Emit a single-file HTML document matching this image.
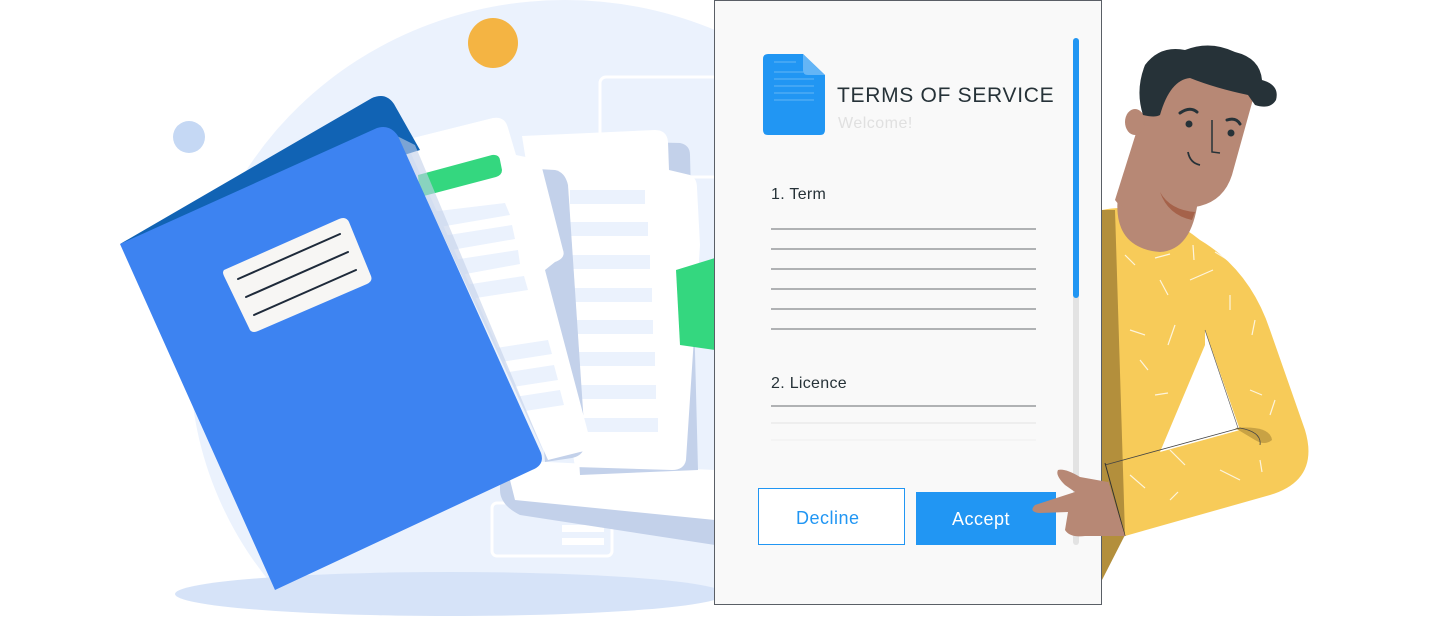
<!DOCTYPE html>
<html><head><meta charset="utf-8"><style>
html,body{margin:0;padding:0;background:#fff;width:1431px;height:617px;overflow:hidden;}
body{position:relative;font-family:"Liberation Sans",sans-serif;}
svg{position:absolute;left:0;top:0;display:block;}
.t{position:absolute;white-space:nowrap;color:#263238;line-height:1;}
</style></head><body>
<svg width="1431" height="617" viewBox="0 0 1431 617">
<defs><clipPath id="bc"><rect x="0" y="0" width="715" height="597"/></clipPath></defs>
<!-- background blob -->
<g clip-path="url(#bc)"><ellipse cx="565" cy="360" rx="375" ry="360" fill="#ebf2fd"/></g>
<ellipse cx="450" cy="594" rx="275" ry="22" fill="#d6e3f8"/>
<!-- faint outlines -->
<rect x="600" y="77" width="120" height="100" rx="6" fill="none" stroke="#fff" stroke-width="3"/>
<rect x="492" y="503" width="120" height="53" rx="5" fill="none" stroke="#fff" stroke-width="3"/>
<rect x="562" y="512" width="42" height="7" fill="#fff"/><rect x="562" y="525" width="42" height="7" fill="#fff"/><rect x="562" y="538" width="42" height="7" fill="#fff"/>
<!-- sun & dot -->
<circle cx="493" cy="43" r="25" fill="#f4b443"/>
<circle cx="189" cy="137" r="16" fill="#c5d8f4"/>
<!-- back sheets -->
<path d="M500 470 L715 485 L715 545 L520 515 Q500 505 500 490Z" fill="#c3d1ea"/>
<path d="M505 460 L715 470 L715 520 L515 500 Z" fill="#fff"/>
<path d="M560 140 L680 143 Q690 145 690 155 L698 470 L580 475 Z" fill="#c3d1ea"/>
<path d="M522 136 L655 130 Q667 130 668 142 L669 170 L690 175 Q697 178 697 188 L700 245 L686 460 Q684 470 672 470 L575 467 Z" fill="#fff"/>
<path d="M676 270 L715 258 L715 350 L680 345 Z" fill="#34d77f"/>
<g fill="#ebf2fd"><rect x="570" y="190" width="75" height="14"/><rect x="570" y="222" width="78" height="14"/><rect x="572" y="255" width="78" height="14"/><rect x="574" y="288" width="78" height="14"/><rect x="575" y="320" width="78" height="14"/><rect x="577" y="352" width="78" height="14"/><rect x="578" y="385" width="78" height="14"/><rect x="580" y="418" width="78" height="14"/></g>
<path d="M520 168 L555 170 Q565 172 568 185 L585 440 Q586 455 572 458 L545 462 Z" fill="#c3d1ea"/>
<path d="M405 140 L493 118 Q505 116 508 128 L516 155 L540 160 L563 250 Q566 258 555 262 L545 270 L590 440 Q592 450 580 452 L548 460 Z" fill="#fff"/>
<path d="M418 175 L492 155 Q499 154 500 160 L502 170 Q502 175 496 177 L420 197 Z" fill="#34d77f"/>
<g fill="#ebf2fd"><path d="M430 212 L505 203 L510 215 L434 228Z"/><path d="M436 237 L512 225 L515 239 L440 252Z"/><path d="M440 262 L518 250 L520 264 L444 278Z"/><path d="M445 288 L524 276 L528 290 L450 302Z"/><path d="M470 352 L548 340 L552 354 L475 366Z"/><path d="M476 377 L554 365 L558 380 L480 392Z"/><path d="M482 402 L560 390 L564 405 L486 417Z"/></g>
<!-- folder -->
<path d="M120 244 L372 98 Q386 92 394 104 L420 150 Z" fill="#1163b4"/>
<path d="M397 136 L415 145 L545 455 Z" fill="#c3d1ea" opacity="0.6"/>
<path d="M120 244 L377 128 Q390 124 398 136 L541 453 Q545 465 532 470 L275 590 Z" fill="#3d83f1"/>
<path d="M224 270 L339 219 Q346 216 349 222 L371 276 Q373 281 367 284 L258 331 Q251 334 249 328 L224 276 Q222 272 224 270Z" fill="#f7f6f4"/>
<g stroke="#1e2a3a" stroke-width="2" stroke-linecap="round"><line x1="238" y1="279" x2="340" y2="234"/><line x1="246" y1="297" x2="348" y2="252"/><line x1="254" y1="315" x2="356" y2="270"/></g>
<!-- man -->
<path d="M1102 210 Q1150 200 1200 240 Q1250 270 1270 330 L1305 430 Q1320 480 1270 495 L1125 536 L1102 540 Z" fill="#f7cb59"/>
<path d="M1205 330 L1240 430 L1160 452 L1205 345Z" fill="#fff"/>
<path d="M1102 210 L1115 210 L1125 535 L1102 580 Z" fill="#b38f3c"/>
<path d="M1235 428 Q1270 425 1272 440 Q1265 446 1255 440 Z" fill="#c8a244"/>
<path d="M1105 465 L1240 428 Q1262 432 1260 445" fill="none" stroke="#444" stroke-width="0.8"/>
<path d="M1105 463 L1125 536" stroke="#333" stroke-width="1"/>
<path d="M1205 330 L1238 428" stroke="#555" stroke-width="0.6"/>
<g stroke="#fff" stroke-width="1.2" opacity="0.8"><line x1="1125" y1="255" x2="1135" y2="265"/><line x1="1155" y1="258" x2="1170" y2="254"/><line x1="1193" y1="245" x2="1194" y2="260"/><line x1="1215" y1="252" x2="1228" y2="260"/><line x1="1160" y1="280" x2="1168" y2="295"/><line x1="1190" y1="280" x2="1213" y2="270"/><line x1="1230" y1="295" x2="1230" y2="310"/><line x1="1130" y1="330" x2="1145" y2="335"/><line x1="1175" y1="325" x2="1168" y2="345"/><line x1="1140" y1="360" x2="1148" y2="370"/><line x1="1155" y1="395" x2="1168" y2="393"/><line x1="1255" y1="320" x2="1252" y2="335"/><line x1="1250" y1="390" x2="1262" y2="395"/><line x1="1275" y1="400" x2="1270" y2="415"/><line x1="1215" y1="395" x2="1222" y2="410"/><line x1="1220" y1="470" x2="1240" y2="480"/><line x1="1170" y1="450" x2="1185" y2="465"/><line x1="1130" y1="475" x2="1145" y2="488"/><line x1="1170" y1="500" x2="1178" y2="492"/><line x1="1260" y1="460" x2="1262" y2="472"/></g>
<!-- neck & head -->
<path d="M1118 195 Q1112 248 1160 252 Q1192 250 1198 200 Z" fill="#b78875"/>
<path d="M1148 95 Q1155 75 1200 75 L1255 92 L1232 175 Q1224 200 1200 206 L1170 212 Q1125 215 1115 200 Z" fill="#b78875"/>
<path d="M1160 192 Q1170 210 1195 212 L1192 220 Q1168 215 1160 192Z" fill="#a5624a"/>
<ellipse cx="1135" cy="122" rx="10" ry="13" fill="#b78875"/>
<path d="M1143 115 Q1135 90 1145 65 Q1160 45 1185 50 Q1210 40 1235 52 Q1260 58 1262 80 Q1280 85 1276 100 Q1270 110 1255 105 L1248 95 Q1215 88 1190 78 Q1170 80 1160 115 Q1155 118 1143 115Z" fill="#263238"/>
<circle cx="1189" cy="124" r="3.5" fill="#263238"/><circle cx="1231" cy="133" r="3.5" fill="#263238"/>
<path d="M1180 113 Q1190 106 1197 112 M1227 120 Q1236 117 1240 124" stroke="#263238" stroke-width="3" fill="none" stroke-linecap="round"/>
<path d="M1212 120 L1212 152 L1220 153" stroke="#263238" stroke-width="1.5" fill="none"/>
<path d="M1188 152 Q1190 163 1200 165" stroke="#263238" stroke-width="1.8" fill="none"/>
<!-- card -->
<rect x="714.5" y="0.5" width="387" height="604" fill="#f9f9f9" stroke="#5a5f66" stroke-width="1"/>
<path d="M768 54 L803 54 L825 75 L825 130 Q825 135 820 135 L768 135 Q763 135 763 130 L763 59 Q763 54 768 54Z" fill="#2196f3"/>
<path d="M803 54 L825 75 L808 75 Q803 75 803 70Z" fill="#64b5f6"/>
<g stroke="#64b5f6" stroke-width="1"><line x1="774" y1="62" x2="796" y2="62"/><line x1="774" y1="72" x2="814" y2="72"/><line x1="774" y1="79" x2="814" y2="79"/><line x1="774" y1="86" x2="814" y2="86"/><line x1="774" y1="93" x2="814" y2="93"/><line x1="774" y1="100" x2="814" y2="100"/></g>
<g stroke="#666b70" stroke-width="1"><line x1="771" y1="229" x2="1036" y2="229"/><line x1="771" y1="249" x2="1036" y2="249"/><line x1="771" y1="269" x2="1036" y2="269"/><line x1="771" y1="289" x2="1036" y2="289"/><line x1="771" y1="309" x2="1036" y2="309"/><line x1="771" y1="329" x2="1036" y2="329"/><line x1="771" y1="406" x2="1036" y2="406"/></g>
<line x1="771" y1="423" x2="1036" y2="423" stroke="#e2e2e2"/><line x1="771" y1="440" x2="1036" y2="440" stroke="#efefef"/>
<rect x="1073" y="38" width="6" height="507" rx="3" fill="#e3e3e3"/>
<rect x="1073" y="38" width="6" height="260" rx="3" fill="#2196f3"/>
<rect x="758.5" y="488.5" width="146" height="56" fill="#fff" stroke="#2196f3"/>
<rect x="916" y="492" width="140" height="53" fill="#2196f3"/>
<!-- hand -->
<path d="M1108 482 L1080 477 Q1065 468 1058 470 Q1055 475 1065 485 L1075 492 L1035 505 Q1028 512 1040 513 L1068 512 L1065 530 Q1070 538 1085 536 L1125 536 L1108 480Z" fill="#b78875"/>
</svg>
<div class="t" style="left:837px;top:85px;font-size:21px;letter-spacing:0.7px;">TERMS OF SERVICE</div>
<div class="t" style="left:838px;top:116px;font-size:16px;color:#e0e0e0;letter-spacing:0.5px;">Welcome!</div>
<div class="t" style="left:771px;top:187px;font-size:16px;letter-spacing:0.3px;">1. Term</div>
<div class="t" style="left:771px;top:376px;font-size:16px;letter-spacing:0.3px;">2. Licence</div>
<div class="t" style="left:796px;top:509px;font-size:18px;color:#2196f3;letter-spacing:0.5px;">Decline</div>
<div class="t" style="left:952px;top:510px;font-size:18px;color:#fff;letter-spacing:0.5px;">Accept</div>
</body></html>
